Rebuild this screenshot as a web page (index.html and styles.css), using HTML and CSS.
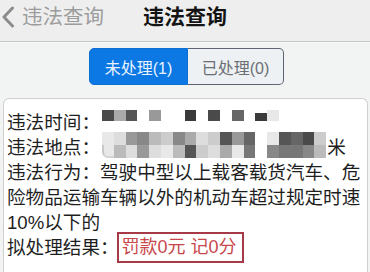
FILE: index.html
```html
<!DOCTYPE html>
<html lang="zh-CN">
<head>
<meta charset="utf-8">
<title>违法查询</title>
<link rel="stylesheet" href="styles.css">
</head>
<body>
<header class="nav">
  <div class="back">
    <svg class="chev" width="14" height="22" viewBox="0 0 14 22"><polyline points="11.5,2 3,11 11.5,20" fill="none" stroke="#8c8c8c" stroke-width="3" stroke-linecap="round" stroke-linejoin="round"/></svg>
    <span class="back-text">违法查询</span>
  </div>
  <h1 class="title">违法查询</h1>
  <div></div>
</header>

<div class="tabs-wrap">
  <div class="tabs">
    <div class="tab tab-on">未处理(1)</div>
    <div class="tab tab-off">已处理(0)</div>
  </div>
</div>

<section class="card">
  <div class="row">
    <span class="label">违法时间：</span>
    <div class="mosaic mosaic-time">
      <i class="kb"></i><i class="kh"></i><i class="kc"></i><i></i><i class="kg"></i><i></i><i></i><i class="ka"></i><i></i><i class="kb"></i><i></i><i class="kd"></i><i></i><i class="ka short"></i><i class="kl"></i>
    </div>
  </div>
  <div class="row">
    <span class="label">违法地点：</span>
    <div class="mosaic mosaic-place">
      <i class="kl"></i><i class="kk"></i><i class="kg"></i><i class="kf"></i><i class="ki"></i><i class="kj"></i><i class="kf"></i><i class="kh"></i><i class="kk"></i><i class="kj"></i><i class="kc"></i><i class="kg"></i><i class="kd"></i><i></i><i class="kl"></i><i class="kc"></i><i class="kd"></i><i class="kb"></i><i class="kj"></i>
      <i class="kl edge"></i><i class="ki"></i><i class="kk"></i><i class="kg"></i><i class="kk"></i><i class="kl"></i><i class="ki"></i><i class="kc"></i><i class="kj"></i><i class="kk"></i><i class="kh"></i><i class="kl"></i><i class="ke"></i><i></i><i class="kf"></i><i class="ke"></i><i class="ke"></i><i class="kf"></i><i class="ki"></i>
    </div>
    <span class="tail">米</span>
  </div>
  <p class="para">违法行为：驾驶中型以上载客载货汽车、危险物品运输车辆以外的机动车超过规定时速10%以下的</p>
  <div class="row row-result">
    <span class="label">拟处理结果：</span>
    <span class="result">罚款0元 记0分</span>
  </div>
</section>
</body>
</html>
```

FILE: styles.css
```css
* { box-sizing: border-box; }
html, body {
  margin: 0;
  padding: 0;
}
body {
  width: 370px;
  height: 272px;
  overflow: hidden;
  background: #f2f3f3;
  font-family: "Liberation Sans", "Noto Sans CJK SC", sans-serif;
  color: #1e1e1e;
}

.nav {
  height: 42px;
  display: grid;
  grid-template-columns: 1fr auto 1fr;
  align-items: start;
  background: #eeeeee;
  border-bottom: 1px solid #c4c4c4;
  box-shadow: 0 1px 0 #fafafa;
}
.back {
  display: flex;
  align-items: center;
  height: 34px;
  padding-left: 1px;
}
.chev { display: block; }
.back-text {
  margin-left: 7px;
  font-size: 20.5px;
  line-height: 34px;
  color: #9c9c9c;
}
.title {
  margin: 0;
  font-size: 21px;
  line-height: 34px;
  font-weight: bold;
  color: #141414;
}

.tabs-wrap {
  display: flex;
  padding: 6px 0 0 89px;
}
.tabs {
  display: flex;
  height: 37px;
}
.tab {
  display: flex;
  align-items: center;
  justify-content: center;
  font-size: 16px;
}
.tab-on {
  width: 99px;
  background: #0b78e4;
  color: #eaf3fd;
  border: 1.5px solid #0b6fd4;
  border-radius: 5px 0 0 5px;
}
.tab-off {
  width: 96px;
  background: #eef1f3;
  color: #6a6f74;
  border: 1.5px solid #5d6670;
  border-left: none;
  border-radius: 0 5px 5px 0;
}

.card {
  margin: 13px 2px 0 3px;
  height: 175px;
  background: #ffffff;
  border: 1px solid #cfcfcf;
  border-bottom: none;
  border-radius: 6px 6px 0 0;
  padding: 11px 0 0 3px;
  font-size: 18.6px;
  line-height: 25px;
}
.row {
  display: flex;
  align-items: flex-start;
  height: 25px;
}
.label { white-space: nowrap; }

.mosaic {
  display: grid;
  grid-template-columns: repeat(19, 11.8px);
  filter: blur(0.7px);
}
.mosaic i { display: block; }
.mosaic-time {
  margin-left: 2px;
  grid-template-rows: 11px;
}
.mosaic-time .short { margin-top: 3px; }
.mosaic-place {
  margin: -3px 0 0 2px;
  grid-template-rows: 13px 13px;
}
.mosaic-place .edge {
  border-left: 2px solid #c9c9c9;
  border-bottom: 2px solid #d4d4d4;
  border-radius: 0 0 0 6px;
}
.tail { margin-left: 1px; }

.ka { background: #3a3a3a; }
.kb { background: #4a4a4a; }
.kc { background: #555555; }
.kd { background: #666666; }
.ke { background: #777777; }
.kf { background: #888888; }
.kg { background: #999999; }
.kh { background: #aaaaaa; }
.ki { background: #bbbbbb; }
.kj { background: #cccccc; }
.kk { background: #dddddd; }
.kl { background: #e8e8e8; }

.para {
  margin: 0;
  width: 360px;
}

.row-result { align-items: center; }
.result {
  margin-left: -2px;
  padding: 0 5px 0 3px;
  height: 31px;
  display: flex;
  align-items: center;
  font-size: 18px;
  color: #c8474c;
  border: 2px solid #a63a46;
  white-space: nowrap;
}
```
